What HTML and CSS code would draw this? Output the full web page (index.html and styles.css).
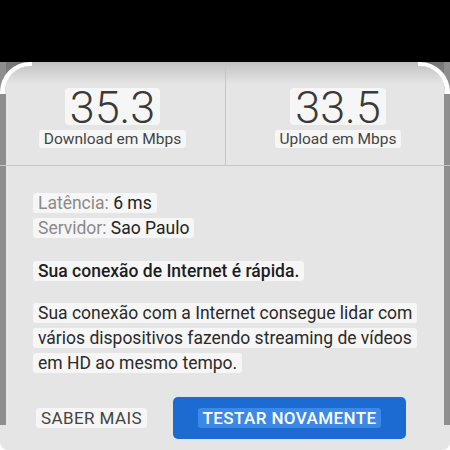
FILE: index.html
```html
<!DOCTYPE html>
<html lang="pt-BR">
<head>
<meta charset="utf-8">
<title>Teste de velocidade</title>
<link rel="stylesheet" href="styles.css">
</head>
<body>
<div class="topbar"></div>
<main class="card">
  <section class="stats">
    <div class="stat">
      <span class="num">35.3</span>
      <div class="lbl"><span class="hl">Download em Mbps</span></div>
    </div>
    <div class="stat">
      <span class="num">33.5</span>
      <div class="lbl"><span class="hl">Upload em Mbps</span></div>
    </div>
  </section>
  <section class="info">
    <div class="meta">
      <p><span class="hl"><span class="key">Latência:</span> 6 ms</span></p>
      <p><span class="hl"><span class="key">Servidor:</span> Sao Paulo</span></p>
    </div>
    <p class="headline"><span class="hl">Sua conexão de Internet é rápida.</span></p>
    <p class="desc"><span class="hl">Sua conexão com a Internet consegue lidar com vários dispositivos fazendo streaming de vídeos em HD ao mesmo tempo.</span></p>
  </section>
  <div class="actions">
    <button class="btn-text"><span class="hl">SABER MAIS</span></button>
    <button class="btn-primary"><span class="hl-blue">TESTAR NOVAMENTE</span></button>
  </div>
</main>
</body>
</html>
```
FILE: styles.css
```css
html, body {
  margin: 0;
  padding: 0;
}
body {
  width: 450px;
  height: 450px;
  overflow: hidden;
  background: #ffffff;
  font-family: Roboto, "Noto Sans", "Liberation Sans", sans-serif;
  color: #333333;
}
.topbar {
  height: 62px;
  background: #000000;
}
.card {
  position: relative;
  height: 388px;
  border-radius: 0 0 8px 8px;
  background:
    linear-gradient(#8e8e8e, #8e8e8e) left top / 6px 363px no-repeat,
    linear-gradient(#8e8e8e, #8e8e8e) right top / 6px 363px no-repeat,
    linear-gradient(#767676, #8e8e8e) left top / 32px 32px no-repeat,
    linear-gradient(#767676, #8e8e8e) right top / 32px 32px no-repeat,
    linear-gradient(#c0c0c0, #e5e5e5) left top / 100% 22px no-repeat,
    #e5e5e5;
}
.card::before,
.card::after {
  content: "";
  position: absolute;
  top: 0;
  width: 32px;
  height: 32px;
  box-sizing: border-box;
  border-top: 4px solid #ffffff;
  background: linear-gradient(#c0c0c0, #e5e5e5) left top / 100% 22px no-repeat, #e5e5e5;
  background-origin: border-box;
  background-clip: padding-box;
}
.card::before {
  left: 0;
  border-left: 5px solid #ffffff;
  border-top-left-radius: 30px;
}
.card::after {
  right: 0;
  border-right: 5px solid #ffffff;
  border-top-right-radius: 30px;
}
.hl {
  background: #f6f6f6;
  padding: 0 5px;
  border-radius: 3px;
  -webkit-box-decoration-break: clone;
  box-decoration-break: clone;
}
.stats {
  display: grid;
  grid-template-columns: 1fr 1fr;
  height: 104px;
  box-sizing: border-box;
  border-bottom: 1px solid #c6c6c6;
}
.stat {
  display: flex;
  flex-direction: column;
  align-items: center;
  padding-top: 26px;
}
.stat + .stat {
  border-left: 1px solid #c6c6c6;
}
.num {
  display: inline-block;
  font-size: 45px;
  font-weight: 300;
  line-height: 35px;
  height: 35px;
  padding: 2px 5px 0 5px;
  background: #f6f6f6;
  border-radius: 4px;
  color: #3a3a3a;
}
.lbl {
  margin-top: 4px;
  font-size: 15.5px;
  line-height: 20px;
  color: #444444;
}
.info {
  padding: 25.1px 33px 0 33px;
}
.info p {
  margin: 0;
}
.meta {
  font-size: 17.5px;
  line-height: 24.5px;
  color: #222222;
}
.key {
  color: #8a8a8a;
}
.headline {
  margin-top: 18.9px !important;
  font-size: 17.5px;
  font-weight: 500;
  line-height: 24px;
  color: #1e1e1e;
}
.desc {
  margin-top: 18.2px !important;
  font-size: 17.5px;
  line-height: 25px;
  color: #2a2a2a;
}
.actions {
  display: flex;
  align-items: center;
  justify-content: space-between;
  margin-top: 20.8px;
  padding: 0 44px 0 36px;
}
.btn-text,
.btn-primary {
  font-family: inherit;
  border: 0;
  margin: 0;
  padding: 0;
  font-size: 17px;
  letter-spacing: 0.4px;
  line-height: 20px;
}
.btn-text {
  background: none;
  color: #444444;
}
.btn-primary {
  width: 233px;
  height: 42px;
  border-radius: 5px;
  background: #1b6bd2;
  color: #ffffff;
  font-weight: 500;
}
.hl-blue {
  background: #3d88e6;
  padding: 0 5px;
  border-radius: 3px;
}
```
